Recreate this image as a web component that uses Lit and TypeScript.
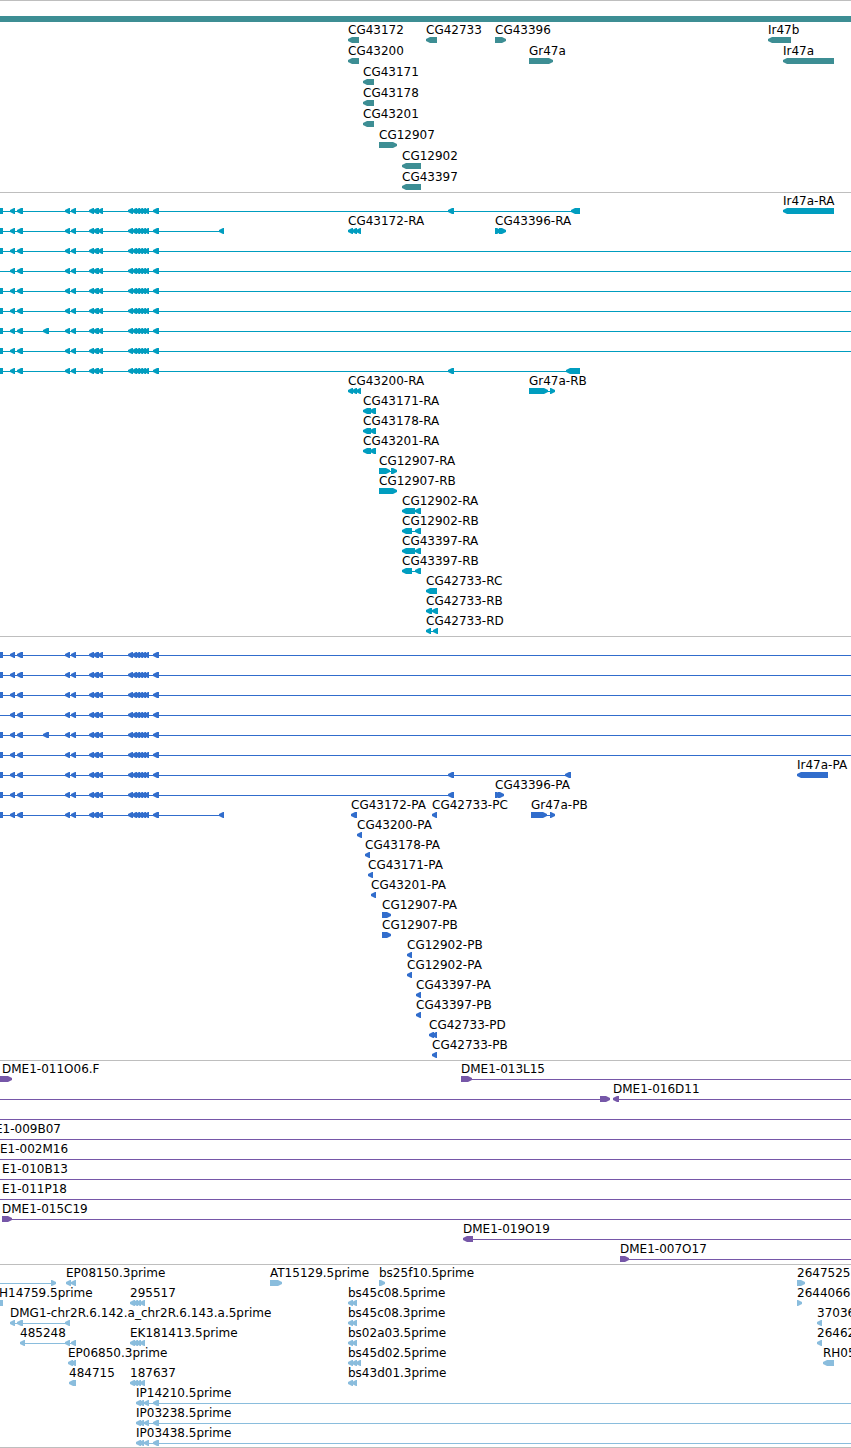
import { LitElement, html, svg, css } from "lit";
import { customElement, property } from "lit/decorators.js";

type Label = [x: number, text: string];

interface Row {
  labels?: Label[];
  /** Space separated marks: "<a-b" and ">a-b" arrows, "#a-b" block, "_a-b" connector; b may be "end". */
  marks?: string;
}

interface Track {
  name: string;
  kind: string;
  rows: Row[];
}

const EXONS =
  "<10-15 <17-23 <65-70 <71-76 <89-94 <93-99 <98-103 <128-133 <132-137 <135-140 <138-143 <141-146 <144-149 <153-159";
const full = `_0-end #0-3 ${EXONS}`;
const open = `_0-end ${EXONS}`;
const extra = `_0-end #0-3 <43-49 ${EXONS}`;
const short = `_0-224 #0-3 ${EXONS} <219-224`;
const triple = "<348-353 <352-357 <356-361";
const pair = "<348-353 <352-357";
const cluster = "<130-135 <133-138 <136-141 <140-145";
const tail = "_136-end <136-141 <139-144 <144-149 <153-159";

const row = (marks: string, ...labels: Label[]): Row => ({ marks, labels });

const TRACKS: Track[] = [
  {
    name: "Genes",
    kind: "gene",
    rows: [
      row("#0-end"),
      row("<348-359 <426-437 >495-506 <768-791", [348, "CG43172"], [426, "CG42733"], [495, "CG43396"], [768, "Ir47b"]),
      row("<348-359 >529-553 <783-834", [348, "CG43200"], [529, "Gr47a"], [783, "Ir47a"]),
      row("<363-374", [363, "CG43171"]),
      row("<363-374", [363, "CG43178"]),
      row("<363-374", [363, "CG43201"]),
      row(">379-397", [379, "CG12907"]),
      row("<402-421", [402, "CG12902"]),
      row("<402-421", [402, "CG43397"]),
    ],
  },
  {
    name: "Transcripts",
    kind: "transcript",
    rows: [
      row(`_0-580 #0-3 ${EXONS} <448-454 <571-580 <783-834`, [783, "Ir47a-RA"]),
      row(`${short} ${triple} >495-501 >499-506`, [348, "CG43172-RA"], [495, "CG43396-RA"]),
      row(full),
      row(open),
      row(full),
      row(full),
      row(extra),
      row(full),
      row(`_0-580 #0-3 ${EXONS} <448-454 <566-580`),
      row(`${triple} >529-548 _545-555 >550-555`, [348, "CG43200-RA"], [529, "Gr47a-RB"]),
      row("<363-371 <370-376", [363, "CG43171-RA"]),
      row("<363-371 <370-376", [363, "CG43178-RA"]),
      row("<363-371 <370-376", [363, "CG43201-RA"]),
      row(">379-390 _388-397 >391-397", [379, "CG12907-RA"]),
      row(">379-397", [379, "CG12907-RB"]),
      row("<402-415 <415-421", [402, "CG12902-RA"]),
      row("<402-412 _411-421 <415-421", [402, "CG12902-RB"]),
      row("<402-415 <415-421", [402, "CG43397-RA"]),
      row("<402-412 _411-421 <415-421", [402, "CG43397-RB"]),
      row("<426-437", [426, "CG42733-RC"]),
      row("<426-432 <432-438", [426, "CG42733-RB"]),
      row("<426-431 _426-438 <433-438", [426, "CG42733-RD"]),
    ],
  },
  {
    name: "Coding sequences",
    kind: "cds",
    rows: [
      row(full),
      row(full),
      row(full),
      row(open),
      row(extra),
      row(full),
      row(`_0-571 #0-3 ${EXONS} <448-454 <565-571 <797-828`, [797, "Ir47a-PA"]),
      row(`_0-454 #0-3 ${EXONS} <448-454 >495-501 >498-504`, [495, "CG43396-PA"]),
      row(`${short} <351-357 <432-437 >531-547 _545-555 >550-555`, [351, "CG43172-PA"], [432, "CG42733-PC"], [531, "Gr47a-PB"]),
      row("<357-362", [357, "CG43200-PA"]),
      row("<365-370", [365, "CG43178-PA"]),
      row("<368-373", [368, "CG43171-PA"]),
      row("<371-376", [371, "CG43201-PA"]),
      row(">382-391", [382, "CG12907-PA"]),
      row(">382-391", [382, "CG12907-PB"]),
      row("<407-412", [407, "CG12902-PB"]),
      row("<407-412", [407, "CG12902-PA"]),
      row("<416-421", [416, "CG43397-PA"]),
      row("<416-421", [416, "CG43397-PB"]),
      row("<429-434 <432-437", [429, "CG42733-PD"]),
      row("<432-437", [432, "CG42733-PB"]),
    ],
  },
  {
    name: "Clone ends",
    kind: "clone",
    rows: [
      row(">0-12 _461-end >461-472", [2, "DME1-011O06.F"], [461, "DME1-013L15"]),
      row("_0-608 >600-610 _615-end <613-619", [613, "DME1-016D11"]),
      row("_0-end"),
      row("_0-end", [-5, "E1-009B07"]),
      row("_0-end", [0, "E1-002M16"]),
      row("_0-end", [2, "E1-010B13"]),
      row("_0-end", [2, "E1-011P18"]),
      row("_2-end >2-12", [2, "DME1-015C19"]),
      row("_465-end <463-473", [463, "DME1-019O19"]),
      row("_620-end >620-629", [620, "DME1-007O17"]),
    ],
  },
  {
    name: "Expressed sequence tags",
    kind: "est",
    rows: [
      row("_0-56 >51-56 <66-71 <71-76 >270-282 >379-385 >797-805", [66, "EP08150.3prime"], [270, "AT15129.5prime"], [379, "bs25f10.5prime"], [797, "2647525"]),
      row(`#0-3 ${cluster} ${pair} >797-802`, [-1, "H14759.5prime"], [130, "295517"], [348, "bs45c08.5prime"], [797, "2644066"]),
      row(`_10-70 <10-15 <17-23 <65-70 ${pair} <817-822`, [10, "DMG1-chr2R.6.142.a_chr2R.6.143.a.5prime"], [348, "bs45c08.3prime"], [817, "37036"]),
      row(`_20-76 <20-25 <65-70 <71-76 ${cluster} ${pair} <817-822`, [20, "485248"], [130, "EK181413.5prime"], [348, "bs02a03.5prime"], [817, "26462"]),
      row(`<68-73 <71-76 ${triple} <823-834`, [68, "EP06850.3prime"], [348, "bs45d02.5prime"], [823, "RH05"]),
      row(`<69-76 ${cluster} ${pair}`, [69, "484715"], [130, "187637"], [348, "bs43d01.3prime"]),
      row(tail, [136, "IP14210.5prime"]),
      row(tail, [136, "IP03238.5prime"]),
      row(tail, [136, "IP03438.5prime"]),
    ],
  },
];

const drawMark = (mark: string) => {
  const [, type, from, to] = /^(.)(\d+)-(\w+)$/.exec(mark)!;
  const a = Number(from);
  if (to === "end") {
    return type === "_"
      ? svg`<rect x=${a} y="3" width="100%" height="1"></rect>`
      : svg`<rect x=${a} y="0" width="100%" height="6"></rect>`;
  }
  const b = Number(to);
  if (type === "_") return svg`<rect x=${a} y="3" width=${b - a} height="1"></rect>`;
  if (type === "#") return svg`<rect x=${a} y="0" width=${b - a} height="6"></rect>`;
  // The head is blunt: two pixels tall at the tip, full height one pixel before its base.
  const head = Math.min(5, b - a) - 1;
  return type === "<"
    ? svg`<polygon points="${a},2 ${a + head},0 ${b},0 ${b},6 ${a + head},6 ${a},4"></polygon>`
    : svg`<polygon points="${b},2 ${b - head},0 ${a},0 ${a},6 ${b - head},6 ${b},4"></polygon>`;
};

@customElement("feature-track")
export class FeatureTrack extends LitElement {
  @property({ attribute: false }) rows: Row[] = [];

  static styles = css`
    :host {
      display: block;
      padding: 1px 0 2px;
      border-top: 1px solid #bebebe;
    }
    :host([kind="gene"]) {
      padding-top: 0;
      color: #3d8e94;
    }
    :host([kind="gene"]) .row {
      padding-top: 1px;
    }
    :host([kind="transcript"]) {
      color: #009dbf;
    }
    :host([kind="cds"]) {
      color: #316dcc;
    }
    :host([kind="clone"]) {
      color: #7657a8;
    }
    :host([kind="est"]) {
      color: #8abddd;
      padding-bottom: 1px;
      border-bottom: 1px solid #bebebe;
    }
    .labels {
      position: relative;
      height: 14px;
      overflow: hidden;
    }
    .label {
      position: absolute;
      top: 0;
      color: #000;
      white-space: nowrap;
    }
    .lane {
      display: block;
      width: 100%;
      height: 6px;
      fill: currentColor;
    }
  `;

  render() {
    return this.rows.map(
      (r) => html`
        <div class="row">
          <div class="labels">
            ${(r.labels ?? []).map(([x, text]) => html`<span class="label" style="left:${x}px">${text}</span>`)}
          </div>
          <svg class="lane" aria-hidden="true">${(r.marks ?? "").split(" ").filter(Boolean).map(drawMark)}</svg>
        </div>
      `
    );
  }
}

@customElement("app-root")
export class AppRoot extends LitElement {
  static styles = css`
    :host {
      display: block;
      overflow: hidden;
      background: #fff;
      font: 12px/14px "DejaVu Sans", sans-serif;
    }
  `;

  render() {
    return html`<main>
      ${TRACKS.map((t) => html`<feature-track kind=${t.kind} aria-label=${t.name} .rows=${t.rows}></feature-track>`)}
    </main>`;
  }
}
